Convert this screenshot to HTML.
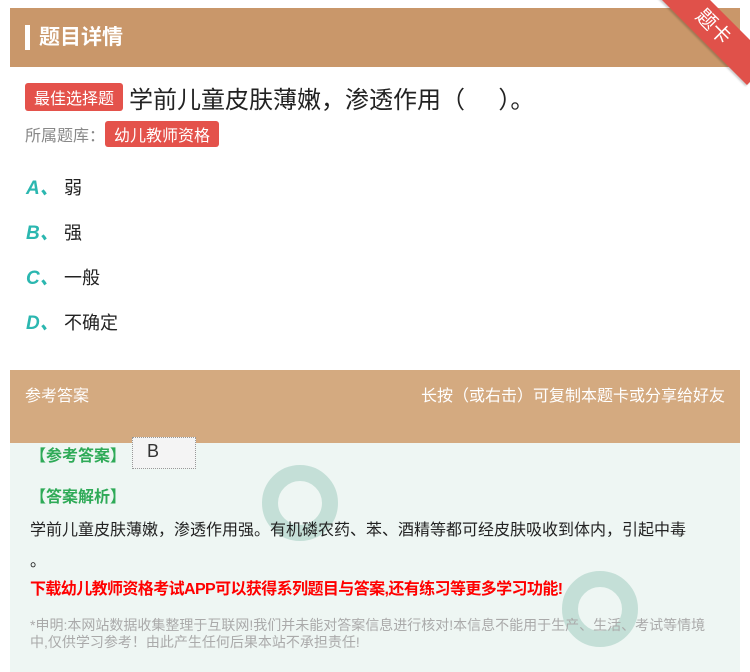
<!DOCTYPE html>
<html><head><meta charset="utf-8"><style>
*{margin:0;padding:0;box-sizing:border-box}
body{width:750px;height:672px;background:#fff;font-family:"Liberation Sans","Noto Sans CJK SC",sans-serif;position:relative;overflow:hidden}
.hd{position:absolute;left:10px;top:8px;width:730px;height:59px;background:#c9976a}
.hd .bar{position:absolute;left:15px;top:17px;width:5px;height:25px;background:#fff}
.hd .t{position:absolute;left:29px;top:13px;color:#fff;font-size:21px;font-weight:bold}
.rib{position:absolute;right:-28px;top:10px;width:130px;height:34px;background:#e0514a;transform:rotate(45deg);color:#fff;font-size:20px;text-align:center;line-height:34px;box-shadow:0 2px 2px rgba(0,0,0,.2)}
.tag{display:inline-block;background:#e4524b;color:#fff;border-radius:3px}
.q{position:absolute;left:25px;top:80px;font-size:24px;color:#222;white-space:nowrap}
.q .tag{font-size:16px;padding:2px 9px;vertical-align:4px;margin-right:6px}
.lib{position:absolute;left:25px;top:121px;font-size:16px;color:#888}
.lib .tag{font-size:16px;padding:1px 9px;color:#fff}
.op{position:absolute;left:26px;font-size:18px;color:#222}
.op b{color:#2bb7b0;font-style:italic;font-size:19px;display:inline-block;width:38px}
.ah{position:absolute;left:10px;top:370px;width:730px;height:73px;background:#d4aa80;color:#fff;font-size:16px}
.ah .l{position:absolute;left:15px;top:12px}
.ah .r{position:absolute;right:15px;top:12px}
.ab{position:absolute;left:10px;top:443px;width:730px;height:229px;background:#eef6f3}
.g{position:absolute;color:#2eaa57;font-size:16px;font-weight:bold}
.ring{position:absolute;border-radius:50%;border:16px solid #b9d9cf;opacity:.8}
</style></head><body>
<div class="hd"><div class="bar"></div><div class="t">题目详情</div></div>
<div class="rib">题卡</div>
<div class="q"><span class="tag">最佳选择题</span>学前儿童皮肤薄嫩，渗透作用（&nbsp;&nbsp;&nbsp;&nbsp;&nbsp;）。</div>
<div class="lib">所属题库：<span class="tag">幼儿教师资格</span></div>
<div class="op" style="top:173px"><b>A、</b>弱</div>
<div class="op" style="top:218px"><b>B、</b>强</div>
<div class="op" style="top:263px"><b>C、</b>一般</div>
<div class="op" style="top:308px"><b>D、</b>不确定</div>
<div class="ah"><span class="l">参考答案</span><span class="r">长按（或右击）可复制本题卡或分享给好友</span></div>
<div class="ab">
<div class="ring" style="left:252px;top:22px;width:76px;height:76px"></div>
<div class="ring" style="left:552px;top:128px;width:76px;height:76px"></div>
<div class="g" style="left:20px;top:-1px">【参考答案】</div>
<div style="position:absolute;left:122px;top:-6px;width:64px;height:32px;background:#f4f4f4;border:1px dotted #999;font-size:18px;color:#333;padding:3px 0 0 14px">B</div>
<div class="g" style="left:20px;top:40px">【答案解析】</div>
<div style="position:absolute;left:20px;top:73px;font-size:16px;color:#222">学前儿童皮肤薄嫩，渗透作用强。有机磷农药、苯、酒精等都可经皮肤吸收到体内，引起中毒</div>
<div style="position:absolute;left:20px;top:104px;font-size:16px;color:#222">。</div>
<div style="position:absolute;left:20px;top:132px;font-size:16px;color:#f00;font-weight:bold;letter-spacing:-0.6px">下载幼儿教师资格考试APP可以获得系列题目与答案,还有练习等更多学习功能!</div>
<div style="position:absolute;left:20px;top:174px;width:690px;font-size:14px;color:#aaa;line-height:17px">*申明:本网站数据收集整理于互联网!我们并未能对答案信息进行核对!本信息不能用于生产、生活、考试等情境中,仅供学习参考！由此产生任何后果本站不承担责任!</div>
</div>
</body></html>
